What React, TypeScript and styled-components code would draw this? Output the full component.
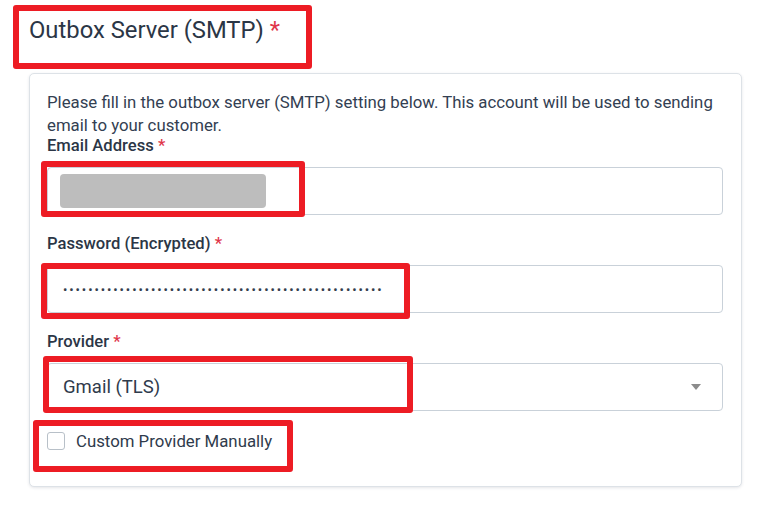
import React from 'react';
import styled, { createGlobalStyle } from 'styled-components';

const GlobalStyle = createGlobalStyle`
    body {
        margin: 0;
        background: #ffffff;
        font-family: Roboto, 'Liberation Sans', sans-serif;
        color: #2f3b4c;
    }
`;

const PASSWORD_LENGTH = 51;

export default function App() {
    return (
        <Page>
            <GlobalStyle />
            <TitleRow>
                <Title>
                    Outbox Server (SMTP) <Required>*</Required>
                </Title>
                <Highlight $top={5} $left={13} $width={299} $height={64} />
            </TitleRow>
            <Card>
                <Description>
                    Please fill in the outbox server (SMTP) setting below. This account will be used to sending
                    email to your customer.
                </Description>

                <Label>
                    Email Address <Required>*</Required>
                </Label>
                <FieldBox>
                    <Input>
                        <Redacted />
                    </Input>
                    <Highlight $top={-6} $left={-6} $width={264} $height={56} />
                </FieldBox>

                <Label $spaced>
                    Password (Encrypted) <Required>*</Required>
                </Label>
                <FieldBox>
                    <Input>
                        <Dots>{'•'.repeat(PASSWORD_LENGTH)}</Dots>
                    </Input>
                    <Highlight $top={-2} $left={-6} $width={369} $height={56} />
                </FieldBox>

                <Label $spaced>
                    Provider <Required>*</Required>
                </Label>
                <FieldBox>
                    <Input>
                        <Value>Gmail (TLS)</Value>
                        <Caret />
                    </Input>
                    <Highlight $top={-7} $left={-4} $width={370} $height={57} />
                </FieldBox>

                <CheckRow>
                    <CheckBox />
                    <CheckLabel>Custom Provider Manually</CheckLabel>
                    <Highlight $top={-11} $left={-14} $width={260} $height={52} />
                </CheckRow>
            </Card>
        </Page>
    );
}

const Page = styled.div`
    width: 775px;
    height: 516px;
    box-sizing: border-box;
    padding-left: 29px;
    overflow: hidden;
`;

const TitleRow = styled.div`
    position: relative;
    height: 73px;
    margin-left: -29px;
    padding-left: 29px;
`;

const Title = styled.h2`
    margin: 0;
    padding-top: 16px;
    font-size: 23.8px;
    font-weight: 400;
    line-height: 28px;
    color: #2b3646;
`;

const Required = styled.span`
    color: #e0364a;
`;

const Highlight = styled.div<{ $top: number; $left: number; $width: number; $height: number }>`
    position: absolute;
    top: ${(p) => p.$top}px;
    left: ${(p) => p.$left}px;
    width: ${(p) => p.$width}px;
    height: ${(p) => p.$height}px;
    box-sizing: border-box;
    border: 6px solid #ed1c24;
    border-radius: 3px;
    pointer-events: none;
`;

const Card = styled.div`
    width: 713px;
    height: 414px;
    box-sizing: border-box;
    padding: 17px 18px 0 17px;
    border: 1px solid #dde2e7;
    border-radius: 5px;
    box-shadow: 0 1px 3px rgba(40, 50, 70, 0.12);
    background: #fff;
`;

const Description = styled.p`
    margin: 0;
    font-size: 16.8px;
    line-height: 23px;
    color: #334052;
`;

const Label = styled.div<{ $spaced?: boolean }>`
    margin-top: ${(p) => (p.$spaced ? '20px' : '0')};
    margin-bottom: 12px;
    font-size: 16.6px;
    font-weight: 500;
    line-height: 18px;
    color: #2b3646;
`;

const FieldBox = styled.div`
    position: relative;
`;

const Input = styled.div`
    display: flex;
    align-items: center;
    height: 48px;
    box-sizing: border-box;
    padding: 0 21px 0 15px;
    border: 1px solid #c9d1d9;
    border-radius: 4px;
    background: #fff;
`;

const Redacted = styled.div`
    width: 206px;
    height: 34px;
    margin-left: -3px;
    border-radius: 4px;
    background: #bdbdbd;
`;

const Dots = styled.span`
    font-size: 13px;
    letter-spacing: 1.9px;
    color: #343e4d;
`;

const Value = styled.span`
    flex: 1;
    font-size: 18.5px;
    color: #2f3b4c;
`;

const Caret = styled.span`
    width: 0;
    height: 0;
    border-left: 5px solid transparent;
    border-right: 5px solid transparent;
    border-top: 6px solid #8c8c8c;
`;

const CheckRow = styled.label`
    position: relative;
    display: flex;
    align-items: center;
    gap: 11px;
    margin-top: 20px;
    height: 20px;
`;

const CheckBox = styled.span`
    width: 18px;
    height: 18px;
    box-sizing: border-box;
    border: 1px solid #b8c0c8;
    border-radius: 3px;
    background: #fff;
`;

const CheckLabel = styled.span`
    font-size: 16.8px;
    color: #2f3b4c;
`;
